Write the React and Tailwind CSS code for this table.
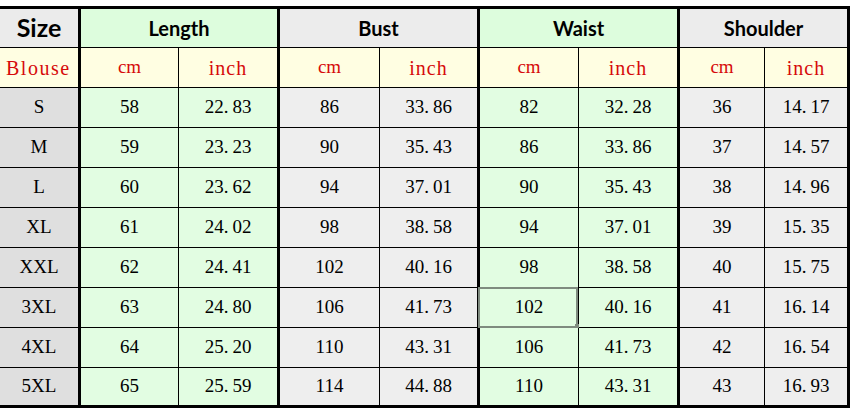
import React from 'react';

const rows = [
  ['S', 58, '22.83', 86, '33.86', 82, '32.28', 36, '14.17'],
  ['M', 59, '23.23', 90, '35.43', 86, '33.86', 37, '14.57'],
  ['L', 60, '23.62', 94, '37.01', 90, '35.43', 38, '14.96'],
  ['XL', 61, '24.02', 98, '38.58', 94, '37.01', 39, '15.35'],
  ['XXL', 62, '24.41', 102, '40.16', 98, '38.58', 40, '15.75'],
  ['3XL', 63, '24.80', 106, '41.73', 102, '40.16', 41, '16.14'],
  ['4XL', 64, '25.20', 110, '43.31', 106, '41.73', 42, '16.54'],
  ['5XL', 65, '25.59', 114, '44.88', 110, '43.31', 43, '16.93'],
];

// background per column (0 = size column)
const colBg = [
  'bg-[#dfdfdf]',
  'bg-[#e2fde2]',
  'bg-[#e2fde2]',
  'bg-[#eeeeee]',
  'bg-[#eeeeee]',
  'bg-[#e2fde2]',
  'bg-[#e2fde2]',
  'bg-[#eeeeee]',
  'bg-[#eeeeee]',
];

// thick divider after size column and after each inch column
const colBorder = [
  'border-r-[3px]',
  'border-r',
  'border-r-[3px]',
  'border-r',
  'border-r-[3px]',
  'border-r',
  'border-r-[3px]',
  'border-r',
  'border-r-[3px]',
];

const serif = "font-['Liberation_Serif',serif]";

const Num = ({ value }) => {
  const text = String(value);
  if (!text.includes('.')) return <span>{text}</span>;
  const [a, b] = text.split('.');
  return (
    <span>
      {a}
      <span className="mr-[4px]">.</span>
      {b}
    </span>
  );
};

const headers = [
  { label: 'Length', bg: 'bg-[#ddfddd]' },
  { label: 'Bust', bg: 'bg-[#ececec]' },
  { label: 'Waist', bg: 'bg-[#ddfddd]' },
  { label: 'Shoulder', bg: 'bg-[#ececec]' },
];

export default function App() {
  return (
    <div className="w-[851px] h-[408px] bg-white pt-[6px]">
      <div className="w-[850px] border-t-[3px] border-b-[3px] border-black grid grid-cols-[81px_98px_101px_100px_100px_99px_101px_85px_85px] grid-rows-[39px_40px_40px_40px_40px_40px_40px_40px_40px_37px] text-black">
        {/* header row */}
        <div className="bg-[#ebebeb] border-r-[3px] border-b border-black flex items-center justify-center font-['Lato',sans-serif] font-bold text-[25px]">
          Size
        </div>
        {headers.map((h) => (
          <div
            key={h.label}
            className={`col-span-2 ${h.bg} border-r-[3px] border-b border-black flex items-center justify-center font-['Lato',sans-serif] font-bold text-[20px]`}
          >
            {h.label}
          </div>
        ))}

        {/* unit row */}
        <div className={`bg-[#fffee2] border-r-[3px] border-b border-black flex items-center pl-[6px] ${serif} text-[20px] tracking-[1.5px] text-[#d60a0a]`}>
          Blouse
        </div>
        {[0, 1, 2, 3].map((i) => (
          <React.Fragment key={i}>
            <div className={`bg-[#fffee2] border-r border-b border-black flex items-center justify-center ${serif} text-[19px] text-[#d60a0a]`}>
              cm
            </div>
            <div className={`bg-[#fffee2] border-r-[3px] border-b border-black flex items-center justify-center ${serif} text-[20px] tracking-[1px] text-[#d60a0a]`}>
              inch
            </div>
          </React.Fragment>
        ))}

        {/* data rows */}
        {rows.map((row, r) =>
          row.map((cell, c) => {
            const last = r === rows.length - 1;
            const selected = r === 5 && c === 5;
            return (
              <div
                key={`${r}-${c}`}
                className={`relative ${colBg[c]} ${colBorder[c]} ${last ? '' : 'border-b'} border-black flex items-center justify-center ${serif} text-[19px]`}
              >
                {c === 0 ? cell : <Num value={cell} />}
                {selected && (
                  <>
                    <div className="absolute -left-[2px] -top-[1px] w-[100px] h-[41px] border-2 border-[#7f8b7f]" />
                    <div className="absolute -right-[2px] -bottom-[2px] w-[5px] h-[5px] bg-[#7f8b7f]" />
                  </>
                )}
              </div>
            );
          })
        )}
      </div>
    </div>
  );
}
